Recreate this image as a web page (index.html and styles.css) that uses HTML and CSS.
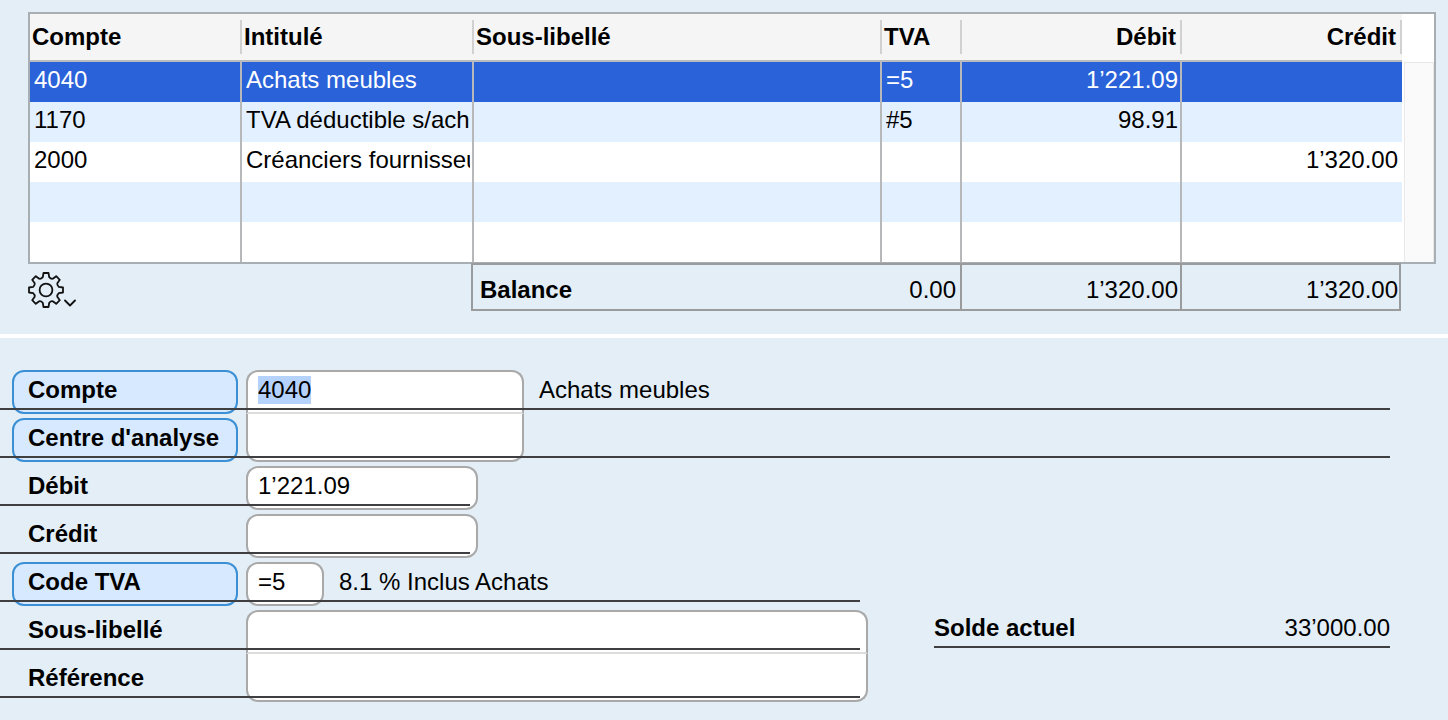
FILE: index.html
```html
<!DOCTYPE html>
<html lang="fr">
<head>
    <meta charset="UTF-8">
    <meta name="viewport" content="width=device-width, initial-scale=1.0">
    <title>Écriture comptable</title>
    <link rel="stylesheet" href="styles.css">
</head>
<body>

    <!-- Lignes de l'écriture -->
    <section class="entries">
        <div class="ledger">
            <table>
                <colgroup>
                    <col class="col-account">
                    <col class="col-title">
                    <col>
                    <col class="col-vat">
                    <col class="col-amount">
                    <col class="col-amount">
                </colgroup>
                <thead>
                    <tr>
                        <th><span>Compte</span></th>
                        <th><span>Intitulé</span></th>
                        <th><span>Sous-libellé</span></th>
                        <th><span>TVA</span></th>
                        <th class="num"><span>Débit</span></th>
                        <th class="num"><span>Crédit</span></th>
                    </tr>
                </thead>
                <tbody>
                    <tr class="selected">
                        <td>4040</td>
                        <td><div class="clip">Achats meubles</div></td>
                        <td></td>
                        <td>=5</td>
                        <td class="num">1’221.09</td>
                        <td class="num"></td>
                    </tr>
                    <tr>
                        <td>1170</td>
                        <td><div class="clip">TVA déductible s/ach</div></td>
                        <td></td>
                        <td>#5</td>
                        <td class="num">98.91</td>
                        <td class="num"></td>
                    </tr>
                    <tr>
                        <td>2000</td>
                        <td><div class="clip">Créanciers fournisseu</div></td>
                        <td></td>
                        <td></td>
                        <td class="num"></td>
                        <td class="num">1’320.00</td>
                    </tr>
                    <tr><td></td><td></td><td></td><td></td><td></td><td></td></tr>
                    <tr><td></td><td></td><td></td><td></td><td></td><td></td></tr>
                </tbody>
            </table>
            <div class="scrollbar"></div>
        </div>

        <div class="entries-footer">
            <div class="tools">
                <button class="gear" type="button" aria-label="Options">
                    <svg width="48" height="36" viewBox="0 0 48 36" fill="none" stroke="#111" stroke-width="1.8" stroke-linejoin="round" stroke-linecap="round">
                        <path d="M14.8 5.2 15.5 1H20.5L21.2 5.2Q23 7.2 24.8 6.7L28.2 4.2 31.8 7.8 29.3 11.2Q28.8 13 30.8 14.8L35 15.5V20.5L30.8 21.2Q28.8 23 29.3 24.8L31.8 28.2 28.2 31.8 24.8 29.3Q23 28.8 21.2 30.8L20.5 35H15.5L14.8 30.8Q13 28.8 11.2 29.3L7.8 31.8 4.2 28.2 6.7 24.8Q7.2 23 5.2 21.2L1 20.5V15.5L5.2 14.8Q7.2 13 6.7 11.2L4.2 7.8 7.8 4.2 11.2 6.7Q13 7.2 14.8 5.2Z"/>
                        <circle cx="18" cy="18" r="6.4"/>
                        <path d="M37 28.5 42 33.5 47 28.5"/>
                    </svg>
                </button>
            </div>
            <div class="balance">
                <div class="balance-label"><strong>Balance</strong><span>0.00</span></div>
                <div class="balance-amount">1’320.00</div>
                <div class="balance-amount">1’320.00</div>
            </div>
        </div>
    </section>

    <!-- Détail de la ligne sélectionnée -->
    <form class="detail">
        <div class="row">
            <button class="name" type="button" id="lblCompte">Compte</button>
            <input class="medium join-top" id="compte" type="text" value="4040" aria-labelledby="lblCompte">
            <span class="hint">Achats meubles</span>
        </div>
        <div class="row">
            <button class="name" type="button" id="lblCentre">Centre d'analyse</button>
            <input class="medium join-bottom" type="text" aria-labelledby="lblCentre">
        </div>
        <div class="row line-short">
            <label class="name" for="debit">Débit</label>
            <input class="small" id="debit" type="text" value="1’221.09">
        </div>
        <div class="row line-short">
            <label class="name" for="credit">Crédit</label>
            <input class="small" id="credit" type="text">
        </div>
        <div class="row line-long">
            <button class="name" type="button" id="lblTva">Code TVA</button>
            <input class="tiny" type="text" value="=5" aria-labelledby="lblTva">
            <span class="hint">8.1 % Inclus Achats</span>
        </div>
        <div class="row line-long">
            <label class="name" for="libelle">Sous-libellé</label>
            <input class="large join-top" id="libelle" type="text">
            <div class="current"><strong>Solde actuel</strong><span>33’000.00</span></div>
        </div>
        <div class="row line-long">
            <label class="name" for="reference">Référence</label>
            <input class="large join-bottom" id="reference" type="text">
        </div>
    </form>

    <script>
        const compte = document.getElementById('compte');
        compte.focus();
        compte.select();
    </script>
</body>
</html>
```
FILE: styles.css
```css
* {
    box-sizing: border-box;
}

body {
    margin: 0;
    background-color: #e3eef6;
    color: #000000;
    font-family: "Liberation Sans", Arial, sans-serif;
    font-size: 24px;
    line-height: 36px;
}

button,
input {
    font: inherit;
    color: inherit;
}

/* Lignes de l'écriture */
.entries {
    padding: 12px 12px 23px 28px;
    border-bottom: 4px solid #ffffff;
}

.ledger {
    display: flex;
    border: 2px solid #a7afb4;
    background-color: #ffffff;
}

table {
    flex: 1;
    width: 0;
    table-layout: fixed;
    border-collapse: separate;
    border-spacing: 0;
}

.col-account {
    width: 212px;
}

.col-title {
    width: 232px;
}

.col-vat {
    width: 80px;
}

.col-amount {
    width: 220px;
}

th {
    height: 48px;
    padding: 0;
    background-color: #f5f5f5;
    border-bottom: 2px solid #b9bcbe;
    text-align: left;
}

th span {
    display: block;
    height: 34px;
    line-height: 34px;
    padding: 0 4px 0 2px;
    border-right: 2px solid #d1d1d1;
}

td {
    height: 40px;
    padding: 0 2px 4px 4px;
    border-right: 2px solid #b7b8b9;
    white-space: nowrap;
}

td:last-child {
    border-right-color: transparent;
}

.num {
    text-align: right;
}

.clip {
    overflow: hidden;
}

tbody tr:nth-child(even) {
    background-color: #e3f0ff;
}

tbody tr.selected {
    background-color: #2962d9;
    color: #ffffff;
}

.scrollbar {
    width: 30px;
    margin: 48px 0 0 2px;
    background-color: #fafafa;
    border: 1px solid #e8e8e8;
    border-bottom: none;
}

/* Outils et balance */
.entries-footer {
    display: flex;
    margin-top: -1px;
    padding-right: 35px;
}

.tools {
    width: 443px;
    padding-top: 9px;
}

.gear {
    display: block;
    padding: 0;
    border: none;
    background: none;
    cursor: pointer;
}

.gear svg {
    display: block;
}

.balance {
    flex: 1;
    display: flex;
    height: 48px;
    border: 2px solid #999b9d;
}

.balance > div {
    height: 44px;
    line-height: 50px;
}

.balance-label {
    flex: 1;
    display: flex;
    justify-content: space-between;
    padding: 0 4px 0 7px;
}

.balance-amount {
    width: 220px;
    padding-right: 2px;
    border-left: 2px solid #999b9d;
    text-align: right;
}

.balance-amount:last-child {
    width: 219px;
    padding-right: 1px;
}

/* Détail */
.detail {
    padding: 32px 58px 18px 12px;
}

.row {
    position: relative;
    display: flex;
    align-items: flex-start;
    height: 44px;
    margin-bottom: 4px;
}

.row:last-child {
    margin-bottom: 0;
}

/* trait de la ligne, par-dessus les champs */
.row::after {
    content: "";
    position: absolute;
    top: 38px;
    left: -12px;
    right: 0;
    height: 2px;
    background-color: #3f3f41;
    pointer-events: none;
}

.line-short::after {
    right: auto;
    width: 470px;
}

.line-long::after {
    right: auto;
    width: 860px;
}

.name {
    flex: none;
    width: 226px;
    height: 44px;
    margin-right: 8px;
    padding: 0 0 4px 14px;
    border: 2px solid transparent;
    border-radius: 12px;
    font-weight: bold;
    text-align: left;
}

button.name {
    background-color: #d7e9ff;
    border-color: #3b8fd4;
    cursor: pointer;
}

input {
    flex: none;
    height: 44px;
    padding: 0 10px 4px;
    background-color: #ffffff;
    border: 2px solid #a9a9aa;
    border-radius: 12px;
    outline: none;
}

input::selection {
    background-color: #b4d2fb;
    color: #000000;
}

.tiny {
    width: 78px;
}

.small {
    width: 232px;
}

.medium {
    width: 278px;
}

.large {
    width: 622px;
}

/* deux champs empilés dans un même cadre */
.join-top {
    border-bottom-color: #dddddd;
    border-radius: 12px 12px 0 0;
}

.join-bottom {
    height: 48px;
    margin-top: -4px;
    border-top: none;
    border-radius: 0 0 12px 12px;
}

.hint {
    padding: 2px 0 0 15px;
}

.current {
    display: flex;
    justify-content: space-between;
    width: 456px;
    height: 38px;
    margin-left: auto;
    border-bottom: 2px solid #3f3f41;
}
```
